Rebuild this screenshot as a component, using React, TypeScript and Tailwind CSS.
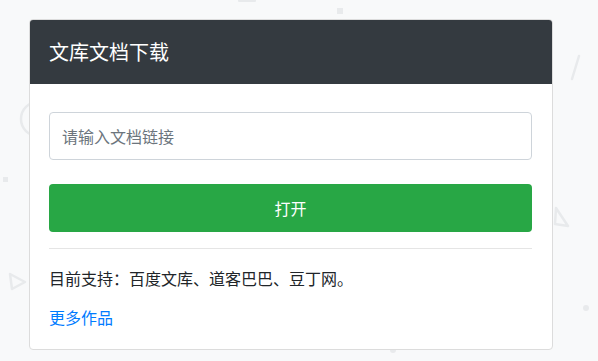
import React from "react";

const font = { fontFamily: '"Noto Sans CJK SC", "Noto Sans", sans-serif' };

// faint decorative particles behind the card
const Particles = () => (
  <svg className="absolute inset-0 h-full w-full" viewBox="0 0 598 361" fill="none">
    <g stroke="#e8eaec" strokeWidth="2.5" strokeLinejoin="round">
      <circle cx="38" cy="119" r="17" />
      <path d="M10 274 L25 282 L12 289 Z" />
      <path d="M556 208 L568 226 L555 224 Z" />
      <path d="M579 56 L572 79" strokeLinecap="round" />
    </g>
    <g fill="#e8eaec">
      <rect x="3" y="177" width="5" height="5" />
      <rect x="337" y="8" width="6" height="6" />
      <rect x="238" y="-3" width="18" height="5" rx="1" />
      <circle cx="586" cy="308" r="3" />
      <circle cx="393" cy="350" r="3" />
    </g>
  </svg>
);

export default function App() {
  return (
    <div className="relative min-h-[361px] w-[598px] overflow-hidden bg-[#f8f9fa]" style={font}>
      <Particles />
      <div className="relative pl-[29px] pt-[19px]">
        <div className="w-[524px] overflow-hidden rounded-[4px] border border-[#dcdcdc] bg-white">
          <div className="flex h-[64px] items-center bg-[#343a40] px-[19px] text-[20px] text-white">
            文库文档下载
          </div>
          <div className="flex flex-col pb-[20px] pl-[19px] pr-[20px] pt-[28px]">
            <input
              type="text"
              placeholder="请输入文档链接"
              className="h-[48px] w-full rounded-[4px] border border-[#ced4da] px-[12px] text-[16px] text-[#495057] outline-none placeholder:text-[#6c757d]"
            />
            <button className="mt-[24px] h-[48px] w-full rounded-[4px] bg-[#28a745] text-[16px] text-white">
              打开
            </button>
            <hr className="mt-[16px] border-t border-[#e5e5e5]" />
            <p className="mt-[17px] text-[16px] leading-[24px] text-[#212529]">
              目前支持：百度文库、道客巴巴、豆丁网。
            </p>
            <a href="#" className="mt-[15px] text-[16px] leading-[24px] text-[#007bff]">
              更多作品
            </a>
          </div>
        </div>
      </div>
    </div>
  );
}
